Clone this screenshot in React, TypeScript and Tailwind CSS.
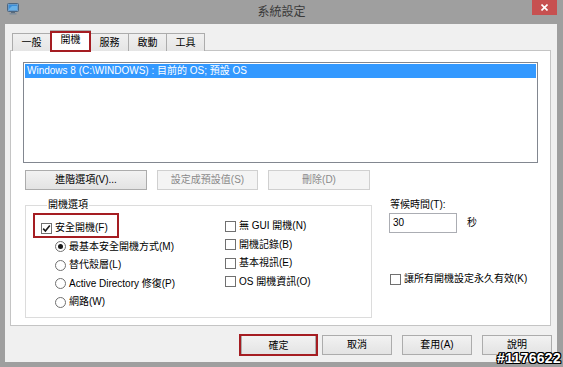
import React from 'react';

function CheckBox({ checked }: { checked?: boolean }) {
  return (
    <span className="w-[11px] h-[11px] border border-[#707070] bg-white flex items-center justify-center shrink-0">
      {checked && (
        <svg width="9" height="9" viewBox="0 0 9 9">
          <path d="M1.2 4.6 L3.4 7 L7.8 1.6" stroke="#1a1a1a" strokeWidth="1.6" fill="none" />
        </svg>
      )}
    </span>
  );
}

function Radio({ checked }: { checked?: boolean }) {
  return (
    <span className="w-[11px] h-[11px] rounded-full border border-[#707070] bg-white flex items-center justify-center shrink-0">
      {checked && <span className="w-[5px] h-[5px] rounded-full bg-[#1a1a1a]" />}
    </span>
  );
}

function Btn({ label, width, disabled }: { label: string; width: string; disabled?: boolean }) {
  return (
    <div
      className={`${width} h-[20px] border flex items-center justify-center text-[10px] ${
        disabled
          ? 'border-[#d0d0d0] bg-[#f4f4f4] text-[#8a8a8a]'
          : 'border-[#acacac] bg-linear-to-b from-[#f2f2f2] to-[#e3e3e3] text-black'
      }`}
    >
      {label}
    </div>
  );
}

function WindowIcon() {
  return (
    <svg width="12" height="12" viewBox="0 0 12 12">
      <rect x="0.5" y="0.5" width="11" height="8" rx="1" fill="#8fa6bf" stroke="#4d6680" />
      <rect x="1.5" y="1.5" width="9" height="6" fill="#3b8ed8" />
      <path d="M2 6 L5 3 L10 3 L10 7 L2 7 Z" fill="#7cc0f0" opacity="0.7" />
      <rect x="4" y="9" width="4" height="1.2" fill="#5b6b7b" />
      <rect x="2.5" y="10.2" width="7" height="1.3" fill="#7b8b9b" />
    </svg>
  );
}

export default function App() {
  const tabs = ['一般', '開機', '服務', '啟動', '工具'];

  return (
    <div className="relative w-[563px] h-[367px] bg-[#9f9f9f] flex flex-col font-['Liberation_Sans','Noto_Sans_CJK_TC',sans-serif] text-[10px] leading-[12px] text-black overflow-hidden">
      {/* title bar */}
      <div className="h-[24px] grid grid-cols-[1fr_auto_1fr] shrink-0">
        <div className="flex items-start pl-[7px] pt-[3px]">
          <WindowIcon />
        </div>
        <div className="flex items-center text-[12px] text-[#3a3a3a]">系統設定</div>
        <div className="flex justify-end items-start pr-[6px]">
          <div className="w-[25px] h-[15px] bg-[#c75050] flex items-center justify-center">
            <svg width="7" height="7" viewBox="0 0 7 7">
              <path d="M0.5 0.5 L6.5 6.5 M6.5 0.5 L0.5 6.5" stroke="#fff" strokeWidth="1.6" />
            </svg>
          </div>
        </div>
      </div>

      {/* window body */}
      <div className="flex-1 ml-[5px] mr-[6px] mb-[5px] bg-[#f0f0f0] pl-[5px] pr-[6px] pt-[6px] flex flex-col">
        {/* tabs */}
        <div className="flex items-end pl-[2px] h-[21px] -mb-[1px] relative z-10">
          {tabs.map((t, i) =>
            i === 1 ? (
              <div
                key={t}
                className="relative w-[41px] h-[21px] -ml-px bg-white border border-[#acacac] border-b-0 flex items-center justify-center pb-[3px]"
              >
                {t}
                <div className="absolute -left-px -right-px top-0 -bottom-[1px] border-2 border-[#a51d22]" />
              </div>
            ) : (
              <div
                key={t}
                className={`w-[39px] h-[18px] ${i === 0 ? '' : '-ml-px'} bg-linear-to-b from-[#f0f0f0] to-[#e5e5e5] border border-[#acacac] border-b-0 flex items-center justify-center`}
              >
                {t}
              </div>
            )
          )}
        </div>

        {/* tab panel */}
        <div className="h-[276px] bg-white border border-[#c4c4c4] flex flex-col">
          {/* list box */}
          <div className="mt-[11px] ml-[12px] w-[515px] h-[101px] border border-[#828790] p-px">
            <div className="h-[14px] bg-[#3399ff] text-white flex items-center pl-[2px]">
              Windows 8 (C:\WINDOWS) : 目前的 OS; 預設 OS
            </div>
          </div>

          {/* buttons */}
          <div className="flex mt-[7px] ml-[14px] gap-[10px]">
            <Btn label="進階選項(V)..." width="w-[122px]" />
            <Btn label="設定成預設值(S)" width="w-[101px]" disabled />
            <Btn label="刪除(D)" width="w-[102px]" disabled />
          </div>

          <div className="flex mt-[8px] ml-[14px] items-start">
            <fieldset className="w-[347px] h-[120px] border border-[#dcdcdc] pt-[7px] pl-[15px]">
              <legend className="ml-[6px] px-[1px] h-[14px] leading-[14px]">開機選項</legend>
              <div className="flex">
                <div className="w-[184px] flex flex-col">
                  <div className="relative h-[18.5px] flex items-center gap-[3px]">
                    <CheckBox checked />
                    <span>安全開機(F)</span>
                    <div className="absolute -left-[8px] -top-[6px] w-[86px] h-[25px] border-2 border-[#a51d22]" />
                  </div>
                  <div className="pl-[14px] flex flex-col">
                    {[
                      ['最基本安全開機方式(M)', true],
                      ['替代殼層(L)', false],
                      ['Active Directory 修復(P)', false],
                      ['網路(W)', false],
                    ].map(([label, on]) => (
                      <div key={label as string} className="h-[18.5px] flex items-center gap-[3px]">
                        <Radio checked={on as boolean} />
                        <span>{label as string}</span>
                      </div>
                    ))}
                  </div>
                </div>
                <div className="flex flex-col -mt-[2px]">
                  {['無 GUI 開機(N)', '開機記錄(B)', '基本視訊(E)', 'OS 開機資訊(O)'].map((label) => (
                    <div key={label} className="h-[18.5px] flex items-center gap-[3px]">
                      <CheckBox />
                      <span>{label}</span>
                    </div>
                  ))}
                </div>
              </div>
            </fieldset>

            <div className="ml-[17px] flex flex-col">
              <div className="h-[14px] leading-[14px] pl-[1px]">等候時間(T):</div>
              <div className="flex items-center mt-[1px]">
                <div className="w-[68px] h-[20px] border border-[#abadb3] bg-white flex items-center pl-[3px]">30</div>
                <span className="ml-[10px]">秒</span>
              </div>
              <div className="mt-[39px] h-[14px] flex items-center gap-[3px] pl-[1px]">
                <CheckBox />
                <span>讓所有開機設定永久有效(K)</span>
              </div>
            </div>
          </div>
        </div>

        {/* dialog buttons */}
        <div className="flex justify-end mt-[9px] -mr-[1px]">
          <div className="relative">
            <Btn label="確定" width="w-[75px] h-[21px]" />
            <div className="absolute -left-[2px] -right-[2px] -top-[1px] bottom-0 border-2 border-[#a51d22]" />
          </div>
          <div className="ml-[6px]">
            <Btn label="取消" width="w-[70px]" />
          </div>
          <div className="ml-[10px]">
            <Btn label="套用(A)" width="w-[70px]" />
          </div>
          <div className="ml-[10px]">
            <Btn label="說明" width="w-[70px]" />
          </div>
        </div>
      </div>

      {/* watermark */}
      <div className="absolute right-[2px] bottom-[2px] text-white font-bold text-[14px] leading-[14px] tracking-[0.3px] font-['Liberation_Sans',sans-serif] [text-shadow:1px_0_0_#000,-1px_0_0_#000,0_1px_0_#000,0_-1px_0_#000,1px_1px_0_#000,-1px_-1px_0_#000,1px_-1px_0_#000,-1px_1px_0_#000]">
        #1176622
      </div>
    </div>
  );
}
